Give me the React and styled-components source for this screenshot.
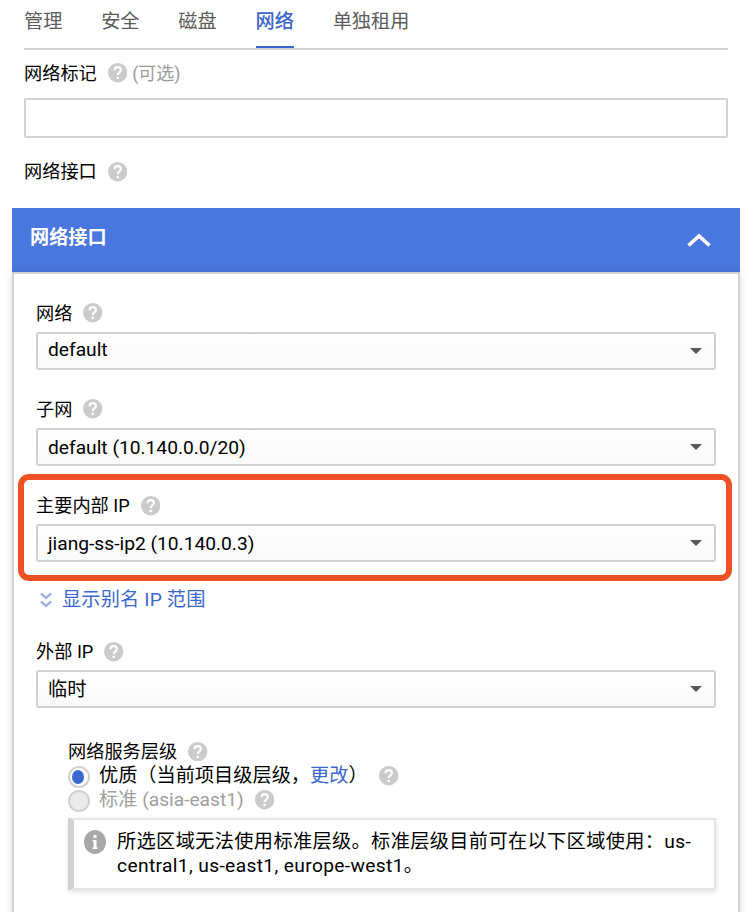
import React from 'react';
import styled, { createGlobalStyle } from 'styled-components';

const GlobalStyle = createGlobalStyle`
    * {
        box-sizing: border-box;
    }
    body {
        margin: 0;
        background: #fff;
        color: #000;
        font-family: Roboto, 'Noto Sans CJK SC', sans-serif;
        font-size: 19.2px;
        overflow: hidden;
    }
`;
const Page = styled.div`
    width: 756px;
    height: 912px;
    overflow: hidden;
`;
const Top = styled.div`
    padding: 0 28px 0 24px;
`;
const Tabs = styled.nav`
    display: flex;
    gap: 38.8px;
    height: 50px;
    border-bottom: 2px solid #d1d1d1;
`;
const Tab = styled.a`
    height: 48px;
    line-height: 44px;
    color: ${({ $active }) => ($active ? '#3b67d0' : '#5c5c5c')};
    font-weight: ${({ $active }) => ($active ? 500 : 400)};
    border-bottom: 2px solid ${({ $active }) => ($active ? '#3b67d0' : 'transparent')};
`;
const Label = styled.div`
    display: flex;
    align-items: center;
    height: ${({ $height }) => $height || 38}px;
    padding-top: ${({ $drop }) => $drop || 0}px;
    font-size: 18.2px;
    line-height: 24px;
    white-space: nowrap;
`;
const HelpSvg = styled.svg`
    width: 19.4px;
    height: 19.4px;
    flex: none;
    margin-left: 11px;
    margin-bottom: ${({ $raise }) => $raise || 0}px;
`;
const Optional = styled.span`
    margin-left: 5px;
    color: #9b9b9b;
    font-size: 18px;
`;
const TagInput = styled.input`
    display: block;
    width: 100%;
    height: 40px;
    padding: 0 12px;
    border: 2px solid #d1d1d1;
    border-radius: 2px;
    outline: 0;
`;
const Panel = styled.section`
    width: 728px;
    margin: 2px 0 0 12px;
`;
const PanelHead = styled.header`
    display: flex;
    align-items: center;
    justify-content: space-between;
    height: 64px;
    padding: 0 28px 0 18px;
    background: #4a77df;
    color: #fff;
    h2 {
        margin: 0 0 4px;
        font-size: 19.2px;
        font-weight: 700;
        line-height: 24px;
    }
`;
const PanelBody = styled.div`
    height: 660px;
    padding: 20px 22px 0;
    border: 2px solid #d1d1d1;
    box-shadow: 0 2px 8px rgba(0, 0, 0, 0.14);
`;
const Field = styled.div`
    position: relative;
    margin-bottom: ${({ $last }) => ($last ? 0 : 20)}px;
`;
const SelectBox = styled.div`
    display: flex;
    align-items: center;
    justify-content: space-between;
    height: 38px;
    padding: 0 12px 0 10px;
    border: 2px solid #d1d1d1;
    border-radius: 3px;
    background: linear-gradient(#fff, #f9f9f9);
    white-space: nowrap;
`;
const Value = styled.span`
    margin-bottom: ${({ $raise }) => $raise || 0}px;
`;
const Caret = styled.span`
    border: 6px solid transparent;
    border-top-color: #555;
    border-bottom: 0;
`;
const Highlight = styled.div`
    position: absolute;
    top: -12px;
    left: -18px;
    width: 714px;
    height: 107px;
    border: 6px solid #ef5125;
    border-radius: 11px;
    pointer-events: none;
`;
const AliasLink = styled.a`
    display: flex;
    align-items: center;
    gap: 10px;
    height: 24px;
    margin: 26px 0 20px 4px;
    color: #3b67d0;
    line-height: 24px;
    letter-spacing: 0.15px;
`;
const Tier = styled.div`
    padding: 31px 0 0 32px;
`;
const Option = styled.div`
    display: flex;
    align-items: center;
    height: 24px;
    line-height: 24px;
    color: ${({ $disabled }) => ($disabled ? '#9e9e9e' : '#000')};
    white-space: nowrap;
`;
const Radio = styled.span`
    display: flex;
    align-items: center;
    justify-content: center;
    flex: none;
    width: 22px;
    height: 22px;
    margin: 2px 9px 0 0;
    border: 2px solid #d1d1d1;
    border-radius: 50%;
    background: ${({ $disabled }) => ($disabled ? '#ebebeb' : '#fff')};
`;
const Dot = styled.span`
    width: 12px;
    height: 14px;
    margin-right: 2px;
    border-radius: 50%;
    background: #3b67d0;
`;
const Change = styled.a`
    color: #3b67d0;
`;
const Notice = styled.div`
    display: flex;
    height: 72px;
    margin-top: 6px;
    padding: 10px 0 0 10px;
    border: 2px solid #e5e5e5;
    border-left: 6px solid #d1d1d1;
    box-shadow: 0 2px 5px rgba(0, 0, 0, 0.12);
    svg {
        flex: none;
        margin: 0 11px 0 0;
    }
`;
const NoticeText = styled.p`
    margin: 0;
    line-height: 24px;
    letter-spacing: 0.36px;
    white-space: nowrap;
`;

const Help = ({ raise }) => (
    <HelpSvg $raise={raise} viewBox="0 0 20 20">
        <circle cx="10" cy="10" r="10" fill="#cbcbcb" />
        <path
            d="M6.7 7.6C6.7 5.5 8.1 4.2 10 4.2S13.3 5.4 13.3 7.3C13.3 9.6 10 9.7 10 12.5"
            fill="none"
            stroke="#fff"
            strokeWidth="2.2"
        />
        <rect x="8.8" y="14.2" width="2.4" height="2.4" fill="#fff" />
    </HelpSvg>
);

const Select = ({ raise, children }) => (
    <SelectBox>
        <Value $raise={raise}>{children}</Value>
        <Caret />
    </SelectBox>
);

const tabs = ['管理', '安全', '磁盘', '网络', '单独租用'];

const App = () => {
    return (
        <Page>
            <GlobalStyle />
            <Top>
                <Tabs>
                    {tabs.map((tab) => (
                        <Tab key={tab} $active={tab === '网络'}>
                            {tab}
                        </Tab>
                    ))}
                </Tabs>
                <Label $height={48}>
                    网络标记
                    <Help raise={2} />
                    <Optional>(可选)</Optional>
                </Label>
                <TagInput type="text" name="tags" />
                <Label $height={68}>
                    网络接口
                    <Help />
                </Label>
            </Top>
            <Panel>
                <PanelHead>
                    <h2>网络接口</h2>
                    <svg width="26" height="16" viewBox="0 0 26 16">
                        <path d="M2.5 13.5L13 4L23.5 13.5" fill="none" stroke="#fff" strokeWidth="3.6" />
                    </svg>
                </PanelHead>
                <PanelBody>
                    <Field>
                        <Label $drop={1}>
                            网络
                            <Help raise={1} />
                        </Label>
                        <Select raise={4}>default</Select>
                    </Field>
                    <Field>
                        <Label $drop={1}>
                            子网
                            <Help raise={1} />
                        </Label>
                        <Select>default (10.140.0.0/20)</Select>
                    </Field>
                    <Field $last>
                        <Label $drop={2}>
                            主要内部 IP
                            <Help />
                        </Label>
                        <Select>jiang-ss-ip2 (10.140.0.3)</Select>
                        <Highlight />
                    </Field>
                    <AliasLink>
                        <svg width="12" height="16" viewBox="0 0 12 16">
                            <path
                                d="M1 1.5L6 6L11 1.5M1 9.5L6 14L11 9.5"
                                fill="none"
                                stroke="#9db4ea"
                                strokeWidth="2.4"
                            />
                        </svg>
                        显示别名 IP 范围
                    </AliasLink>
                    <Field $last>
                        <Label $drop={2}>
                            外部 IP
                            <Help />
                        </Label>
                        <Select raise={2}>临时</Select>
                    </Field>
                    <Tier>
                        <Label $height={25}>
                            网络服务层级
                            <Help />
                        </Label>
                        <Option>
                            <Radio>
                                <Dot />
                            </Radio>
                            <span>
                                优质（当前项目级层级，<Change>更改</Change>）
                            </span>
                            <Help />
                        </Option>
                        <Option $disabled>
                            <Radio $disabled />
                            标准 (asia-east1)
                            <Help />
                        </Option>
                        <Notice>
                            <svg width="22" height="24" viewBox="0 0 22 24">
                                <ellipse cx="11" cy="12" rx="11" ry="12" fill="#a8a8a8" />
                                <path d="M9.5 5h3v3h-3zM8.5 10h4v7.5h1v1.5h-5v-1.5h1V11.5h-1z" fill="#fff" />
                            </svg>
                            <NoticeText>
                                所选区域无法使用标准层级。标准层级目前可在以下区域使用：us-
                                <br />
                                central1, us-east1, europe-west1。
                            </NoticeText>
                        </Notice>
                    </Tier>
                </PanelBody>
            </Panel>
        </Page>
    );
};

export default App;
